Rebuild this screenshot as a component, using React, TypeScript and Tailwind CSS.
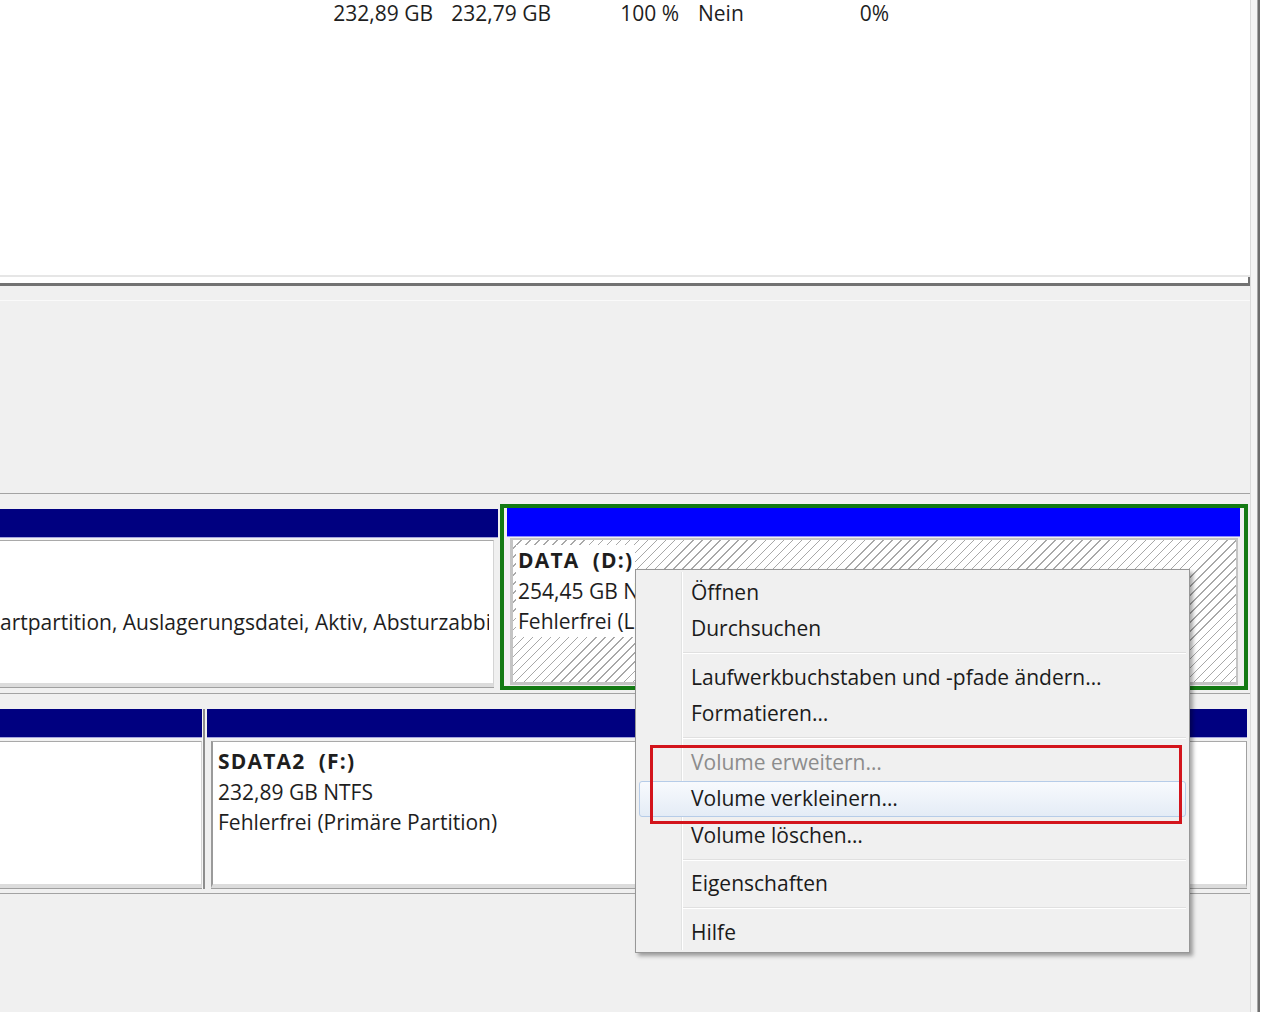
import React from "react";

type Item = { label: string; disabled?: boolean; active?: boolean } | "sep";

const menuItems: Item[] = [
  { label: "Öffnen" },
  { label: "Durchsuchen" },
  "sep",
  { label: "Laufwerkbuchstaben und -pfade ändern…" },
  { label: "Formatieren…" },
  "sep",
  { label: "Volume erweitern…", disabled: true },
  { label: "Volume verkleinern…", active: true },
  { label: "Volume löschen…" },
  "sep",
  { label: "Eigenschaften" },
  "sep",
  { label: "Hilfe" },
];

function ContextMenu() {
  return (
    <div className="absolute left-[635px] top-[569px] h-[384px] w-[555px] border border-[#979797] bg-[#f0f0f0] pt-[4px] shadow-[3px_3px_4px_rgba(0,0,0,0.35)]">
      <div className="absolute bottom-[2px] left-[45px] top-[2px] w-[1px] bg-[#e2e3e3]" />
      <div className="absolute bottom-[2px] left-[46px] top-[2px] w-[1px] bg-white" />
      {menuItems.map((it, i) =>
        it === "sep" ? (
          <div key={i} className="ml-[47px] mr-[3px] flex h-[12px] flex-col justify-center">
            <div className="h-[1px] bg-[#e0e0e0]" />
            <div className="h-[1px] bg-white" />
          </div>
        ) : it.active ? (
          <div
            key={i}
            className="relative mx-[3px] flex h-[36.5px] items-center rounded-[3px] border border-[#b6cce8] bg-gradient-to-b from-[#f8fafd] to-[#e4ecf6] pl-[51px] text-[#1b1b1b]"
          >
            {it.label}
          </div>
        ) : (
          <div
            key={i}
            className={
              "relative mx-[3px] flex h-[36.5px] items-center pl-[52px] " +
              (it.disabled ? "text-[#8c8c8c]" : "text-[#1b1b1b]")
            }
          >
            {it.label}
          </div>
        )
      )}
    </div>
  );
}

export default function App() {
  return (
    <div className="relative flex h-[1012px] w-[1280px] overflow-hidden bg-white font-['Open_Sans','Noto_Sans',sans-serif] text-[21px] text-[#1e1e1e]">
      <div className="flex w-[1250px] flex-col">
        {/* top list pane */}
        <div className="flex h-[286px] flex-col bg-white">
          <div className="h-[275px]">
            <div className="flex whitespace-nowrap leading-[26px]">
              <div className="w-[433px] text-right">232,89 GB</div>
              <div className="w-[118px] text-right">232,79 GB</div>
              <div className="w-[128px] text-right">100 %</div>
              <div className="w-[180px] pl-[19px]">Nein</div>
              <div className="w-[30px] text-right">0%</div>
            </div>
          </div>
          <div className="h-[2px] bg-[#e6e6e6]" />
          <div className="flex h-[9px]">
            <div className="flex flex-1 flex-col">
              <div className="h-[6px] bg-white" />
              <div className="h-[3px] bg-[#727272]" />
            </div>
            <div className="w-[2px] bg-[#727272]" />
          </div>
        </div>

        {/* graphical pane */}
        <div className="flex flex-1 flex-col bg-[#f0f0f0]">
          <div className="h-[15px] border-b border-[#fafafa]" />
          <div className="h-[192px]" />

          {/* disk row 1 */}
          <div className="h-[200px] border-t border-[#a3a3a3] pt-[10px]">
            <div className="flex h-[186px]">
              {/* left partition (C:) */}
              <div className="flex w-[498px] flex-col pt-[5px]">
                <div className="h-[28px] bg-[#000080]" />
                <div className="h-[1px] bg-[#a4a4dc]" />
                <div className="h-[2px]" />
                <div className="mr-[4px] flex-1 border-b-[4px] border-r border-t border-b-[#dcdcdc] border-r-[#d4d4d4] border-t-[#a9a9a9] bg-white pt-[5px] leading-[30.5px]">
                  <div className="h-[30.5px]" />
                  <div className="h-[30.5px]" />
                  <div className="w-[489px] overflow-hidden whitespace-nowrap">
                    artpartition, Auslagerungsdatei, Aktiv, Absturzabbild, Primäre Partition)
                  </div>
                </div>
                <div className="mr-[4px] h-[1px] bg-[#a0a0a0]" />
                <div className="h-[2px]" />
              </div>
              <div className="w-[2px]" />
              {/* DATA (D:) selected */}
              <div className="flex w-[748px] flex-col border-[4px] border-[#137a13] pl-[3px] pr-[4px]">
                <div className="h-[28px] bg-[#0000ff]" />
                <div className="h-[1px] bg-[#8c8cff]" />
                <div className="h-[1px]" />
                <div className="ml-[3px] mr-[2px] h-[147px] border-b-[3px] border-l-[3px] border-r-[2px] border-t-[2px] border-[#c4c4c4] bg-[repeating-linear-gradient(135deg,#ffffff_0px,#ffffff_5.4px,#a8a8a8_5.4px,#a8a8a8_6.4px)] pl-[3px] pt-[5px] leading-[30.5px]">
                  <div className="w-fit whitespace-pre bg-white px-[2px] font-bold tracking-[1.2px]">DATA  (D:)</div>
                  <div className="w-fit bg-white px-[2px]">254,45 GB NTFS</div>
                  <div className="w-fit bg-white px-[2px]">Fehlerfrei (Logisches Laufwerk)</div>
                </div>
              </div>
            </div>
          </div>

          {/* disk row 2 */}
          <div className="h-[200px] border-t border-[#a3a3a3] pb-[4px] pt-[15px]">
            <div className="flex h-[180px]">
              <div className="flex w-[202px] flex-col">
                <div className="h-[28px] bg-[#000080]" />
                <div className="h-[1px] bg-[#a4a4dc]" />
                <div className="h-[3px]" />
                <div className="flex-1 border-b-[4px] border-r border-t border-b-[#dcdcdc] border-r-[#d4d4d4] border-t-[#a9a9a9] bg-white" />
                <div className="h-[1px] bg-[#a0a0a0]" />
              </div>
              <div className="flex w-[5px]">
                <div className="w-[1px] bg-[#f6f6f6]" />
                <div className="w-[2px] bg-[#8e8e8e]" />
                <div className="w-[2px]" />
              </div>
              <div className="flex w-[1040px] flex-col">
                <div className="h-[28px] bg-[#000080]" />
                <div className="h-[1px] bg-[#a4a4dc]" />
                <div className="h-[3px]" />
                <div className="ml-[4px] flex-1 border-b-[4px] border-l-2 border-r border-t border-b-[#dcdcdc] border-l-[#9a9a9a] border-r-[#a0a0a0] border-t-[#a9a9a9] bg-white pl-[5px] pt-[4px] leading-[30.5px]">
                  <div className="whitespace-pre font-bold tracking-[1.2px]">SDATA2  (F:)</div>
                  <div>232,89 GB NTFS</div>
                  <div>Fehlerfrei (Primäre Partition)</div>
                </div>
                <div className="ml-[4px] h-[1px] bg-[#a0a0a0]" />
              </div>
            </div>
          </div>

          <div className="flex-1 border-t border-[#a3a3a3]" />
        </div>
      </div>

      {/* right window edge */}
      <div className="w-[1px] bg-[#dcdcdc]" />
      <div className="w-[6px] bg-[#f5f5f5]" />
      <div className="w-[1px] bg-[#a8a8a8]" />
      <div className="w-[2px] bg-[#6e6e6e]" />
      <div className="flex-1 bg-white" />

      <ContextMenu />

      {/* red annotation frame */}
      <div className="absolute left-[650px] top-[745px] h-[79px] w-[532px] border-[3px] border-[#d3141c]" />
    </div>
  );
}
